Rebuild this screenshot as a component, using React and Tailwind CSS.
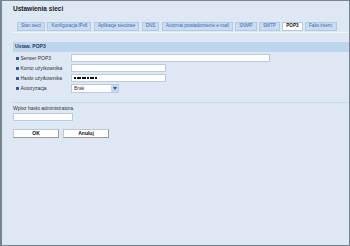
const tabs = [
  "Stan sieci",
  "Konfiguracja IPv6",
  "Aplikacje sieciowe",
  "DNS",
  "Automat.powiadomienie e-mail",
  "SNMP",
  "SMTP",
  "POP3",
  "Faks intern.",
];

function Row({ label, children }) {
  return (
    <div className="flex h-[10px] items-center">
      <span className="ml-[3px] h-[3px] w-[3px] bg-[#2d5a9a]" />
      <span className="ml-[1.5px] w-[50.5px] text-[5px] leading-none text-[#333]">{label}</span>
      {children}
    </div>
  );
}

export default function App() {
  return (
    <div className="h-[246px] w-[350px] overflow-hidden border border-l-2 border-[#76828e] bg-[#dde8f4] font-['Liberation_Sans',Arial,sans-serif]">
      <div className="pl-[11px] pt-[4px] text-[6.5px] font-bold leading-[8px] text-[#222]">
        Ustawienia sieci
      </div>

      <div className="ml-[15px] mt-[9px] flex gap-[2.5px]">
        {tabs.map((t) =>
          t === "POP3" ? (
            <div
              key={t}
              className="flex h-[9px] items-center border border-[#b4c8dc] bg-white px-[3px] text-[4.6px] font-bold leading-none text-[#111]"
            >
              {t}
            </div>
          ) : (
            <div
              key={t}
              className="flex h-[9px] items-center border border-[#b2c9e4] bg-[#cadcf2] px-[3px] text-[4.6px] leading-none text-[#3c68ae]"
            >
              {t}
            </div>
          )
        )}
      </div>
      <div className="ml-[11px] mt-[0.5px] h-[1px] bg-[#f2f7fc]" />

      <div className="ml-[11px] mt-[9px] flex h-[10px] items-center bg-[#bdd6ee] pl-[2px] text-[5px] font-bold leading-none text-[#1f3c66]">
        Ustaw. POP3
      </div>

      <div className="ml-[11px] mt-[1.5px]">
        <Row label="Serwer POP3">
          <div className="h-[8px] w-[199px] border border-[#bccbda] bg-white" />
        </Row>
        <Row label="Konto użytkownika">
          <div className="h-[8px] w-[95px] border border-[#bccbda] bg-white" />
        </Row>
        <Row label="Hasło użytkownika">
          <div className="flex h-[8px] w-[95px] items-center gap-[0.6px] border border-[#bccbda] bg-white pl-[2px]">
            {[0, 1, 2, 3, 4, 5, 6, 7, 8].map((i) => (
              <span key={i} className="h-[2px] w-[2px] bg-[#111]" />
            ))}
          </div>
        </Row>
        <Row label="Autoryzacja">
          <div className="flex h-[9px] w-[48px] items-center justify-between border border-[#bccbda] bg-white pl-[2px]">
            <span className="text-[5px] leading-none text-[#333]">Brak</span>
            <span className="flex h-full w-[7px] items-center justify-center bg-[#c4d8ee]">
              <svg width="4" height="3" viewBox="0 0 4 3">
                <path d="M0 0L4 0L2 3Z" fill="#2d5a9a" />
              </svg>
            </span>
          </div>
        </Row>
      </div>

      <div className="ml-[11px] mt-[8.5px] h-[1px] bg-[#ccd9e6]" />

      <div className="ml-[11px] mt-[2.5px] text-[5px] leading-[6px] text-[#333]">
        Wpisz hasło administratora.
      </div>
      <div className="ml-[11px] mt-[2px] h-[8px] w-[60px] border border-[#bccbda] bg-white" />

      <div className="ml-[11px] mt-[8px] flex gap-[4px]">
        <div className="flex h-[9px] w-[46px] items-center justify-center border border-[#c6c6c6] border-b-[#9a9a9a] border-r-[#9a9a9a] bg-white text-[5px] font-bold leading-none text-[#111]">
          OK
        </div>
        <div className="flex h-[9px] w-[46px] items-center justify-center border border-[#c6c6c6] border-b-[#9a9a9a] border-r-[#9a9a9a] bg-white text-[5px] font-bold leading-none text-[#111]">
          Anuluj
        </div>
      </div>
    </div>
  );
}
